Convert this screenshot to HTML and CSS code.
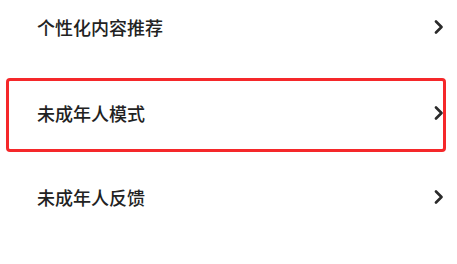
FILE: index.html
```html
<!DOCTYPE html>
<html lang="zh-CN">
<head>
<meta charset="utf-8">
<title>设置</title>
<link rel="stylesheet" href="styles.css">
</head>
<body>
<ul class="menu">
  <li class="row">
    <span class="label">个性化内容推荐</span>
    <svg class="chev" width="10" height="14" viewBox="0 0 10 14"><path d="M2 1.5 L7.5 7 L2 12.5" fill="none" stroke="#2a2a2a" stroke-width="2.6" stroke-linecap="round" stroke-linejoin="round"/></svg>
  </li>
  <li class="row">
    <span class="label">未成年人模式</span>
    <svg class="chev" width="10" height="14" viewBox="0 0 10 14"><path d="M2 1.5 L7.5 7 L2 12.5" fill="none" stroke="#2a2a2a" stroke-width="2.6" stroke-linecap="round" stroke-linejoin="round"/></svg>
    <div class="highlight"></div>
  </li>
  <li class="row">
    <span class="label">未成年人反馈</span>
    <svg class="chev" width="10" height="14" viewBox="0 0 10 14"><path d="M2 1.5 L7.5 7 L2 12.5" fill="none" stroke="#2a2a2a" stroke-width="2.6" stroke-linecap="round" stroke-linejoin="round"/></svg>
  </li>
</ul>
</body>
</html>
```
FILE: styles.css
```css
html, body {
  margin: 0;
  padding: 0;
  background: #ffffff;
  overflow: hidden;
}
body {
  width: 457px;
  height: 264px;
  font-family: "Noto Sans CJK SC", "Noto Sans", sans-serif;
  color: #222222;
}
.menu {
  list-style: none;
  margin: -16px 0 0 0;
  padding: 0;
}
.row {
  position: relative;
  height: 85px;
  display: flex;
  align-items: center;
  justify-content: space-between;
  padding: 0 13px 0 37px;
  box-sizing: border-box;
}
.row:nth-child(2) {
  padding-top: 3px;
}
.label {
  font-size: 18px;
  font-weight: 500;
  letter-spacing: 0;
  line-height: 1;
}
.chev {
  display: block;
}
.highlight {
  position: absolute;
  left: 6px;
  right: 11px;
  top: 9px;
  height: 74px;
  border: 3px solid #f5282a;
  border-radius: 4px;
  box-sizing: border-box;
  pointer-events: none;
}
```
